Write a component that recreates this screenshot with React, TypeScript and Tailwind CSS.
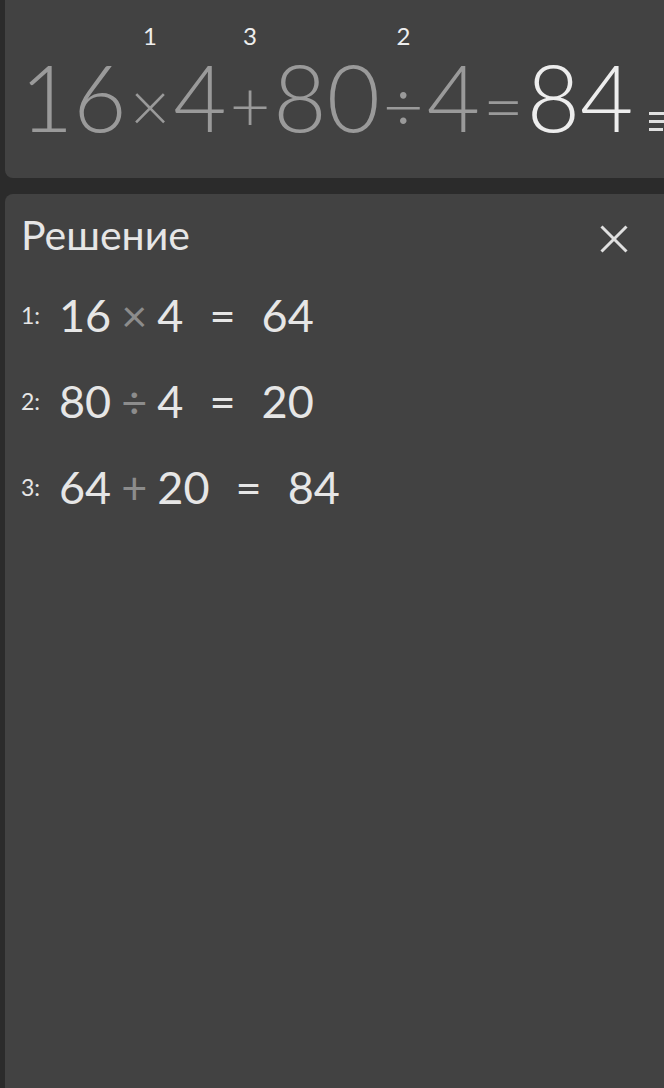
import React from "react";

type Step = { n: number; a: string; op: string; b: string; res: string };

const steps: Step[] = [
  { n: 1, a: "16", op: "×", b: "4", res: "64" },
  { n: 2, a: "80", op: "÷", b: "4", res: "20" },
  { n: 3, a: "64", op: "+", b: "20", res: "84" },
];

function Op({ sign, order }: { sign: string; order?: number }) {
  return (
    <span className="relative mx-[3px] text-[70px]">
      {sign}
      {order ? (
        <span className="absolute left-1/2 -translate-x-1/2 top-[-46px] text-[24px] font-normal leading-none text-[#eeeeee]">
          {order}
        </span>
      ) : null}
    </span>
  );
}

export default function App() {
  return (
    <div
      className="w-[664px] h-[1088px] overflow-hidden bg-[#2b2b2b] pl-[5px] flex flex-col gap-4"
      style={{ fontFamily: "Lato, 'Noto Sans', sans-serif" }}
    >
      <div className="h-[178px] shrink-0 bg-[#424242] rounded-bl-lg pt-[51px] pl-[15px] overflow-hidden">
        <div className="flex items-baseline whitespace-nowrap text-[92px] leading-none font-light text-[#9a9a9a]">
          <span>16</span>
          <Op sign="×" order={1} />
          <span>4</span>
          <Op sign="+" order={3} />
          <span>80</span>
          <Op sign="÷" order={2} />
          <span>4</span>
          <Op sign="=" />
          <span className="text-[#ededed]">84</span>
          <svg width="24" height="20" viewBox="0 0 24 20" className="ml-4 mb-[34px] shrink-0" fill="#e0e0e0">
            <rect x="0" y="0" width="24" height="3" />
            <rect x="0" y="8" width="24" height="3" />
            <rect x="0" y="16" width="14" height="3" />
            <rect x="17" y="16" width="7" height="3" />
          </svg>
        </div>
      </div>

      <div className="flex-1 bg-[#424242] rounded-tl-lg pt-[20px] pl-4 pr-9 text-[#e6e6e6]">
        <div className="flex items-center justify-between">
          <h2 className="text-[41px] leading-none font-normal">Решение</h2>
          <svg width="28" height="28" viewBox="0 0 28 28" stroke="#e0e0e0" strokeWidth="3" className="mt-2">
            <line x1="1.5" y1="1.5" x2="26.5" y2="26.5" />
            <line x1="26.5" y1="1.5" x2="1.5" y2="26.5" />
          </svg>
        </div>

        <div className="mt-[38px] flex flex-col gap-[42px]">
          {steps.map((s) => (
            <div key={s.n} className="flex items-center h-[44px] whitespace-nowrap">
              <span className="w-[38px] text-[23px] leading-none">{s.n}:</span>
              <div className="flex items-baseline text-[45px] leading-none">
                <span>{s.a}</span>
                <span className="mx-[10px] text-[#8c8c8c]">{s.op}</span>
                <span>{s.b}</span>
                <span className="mx-[26px]">=</span>
                <span>{s.res}</span>
              </div>
            </div>
          ))}
        </div>
      </div>
    </div>
  );
}
